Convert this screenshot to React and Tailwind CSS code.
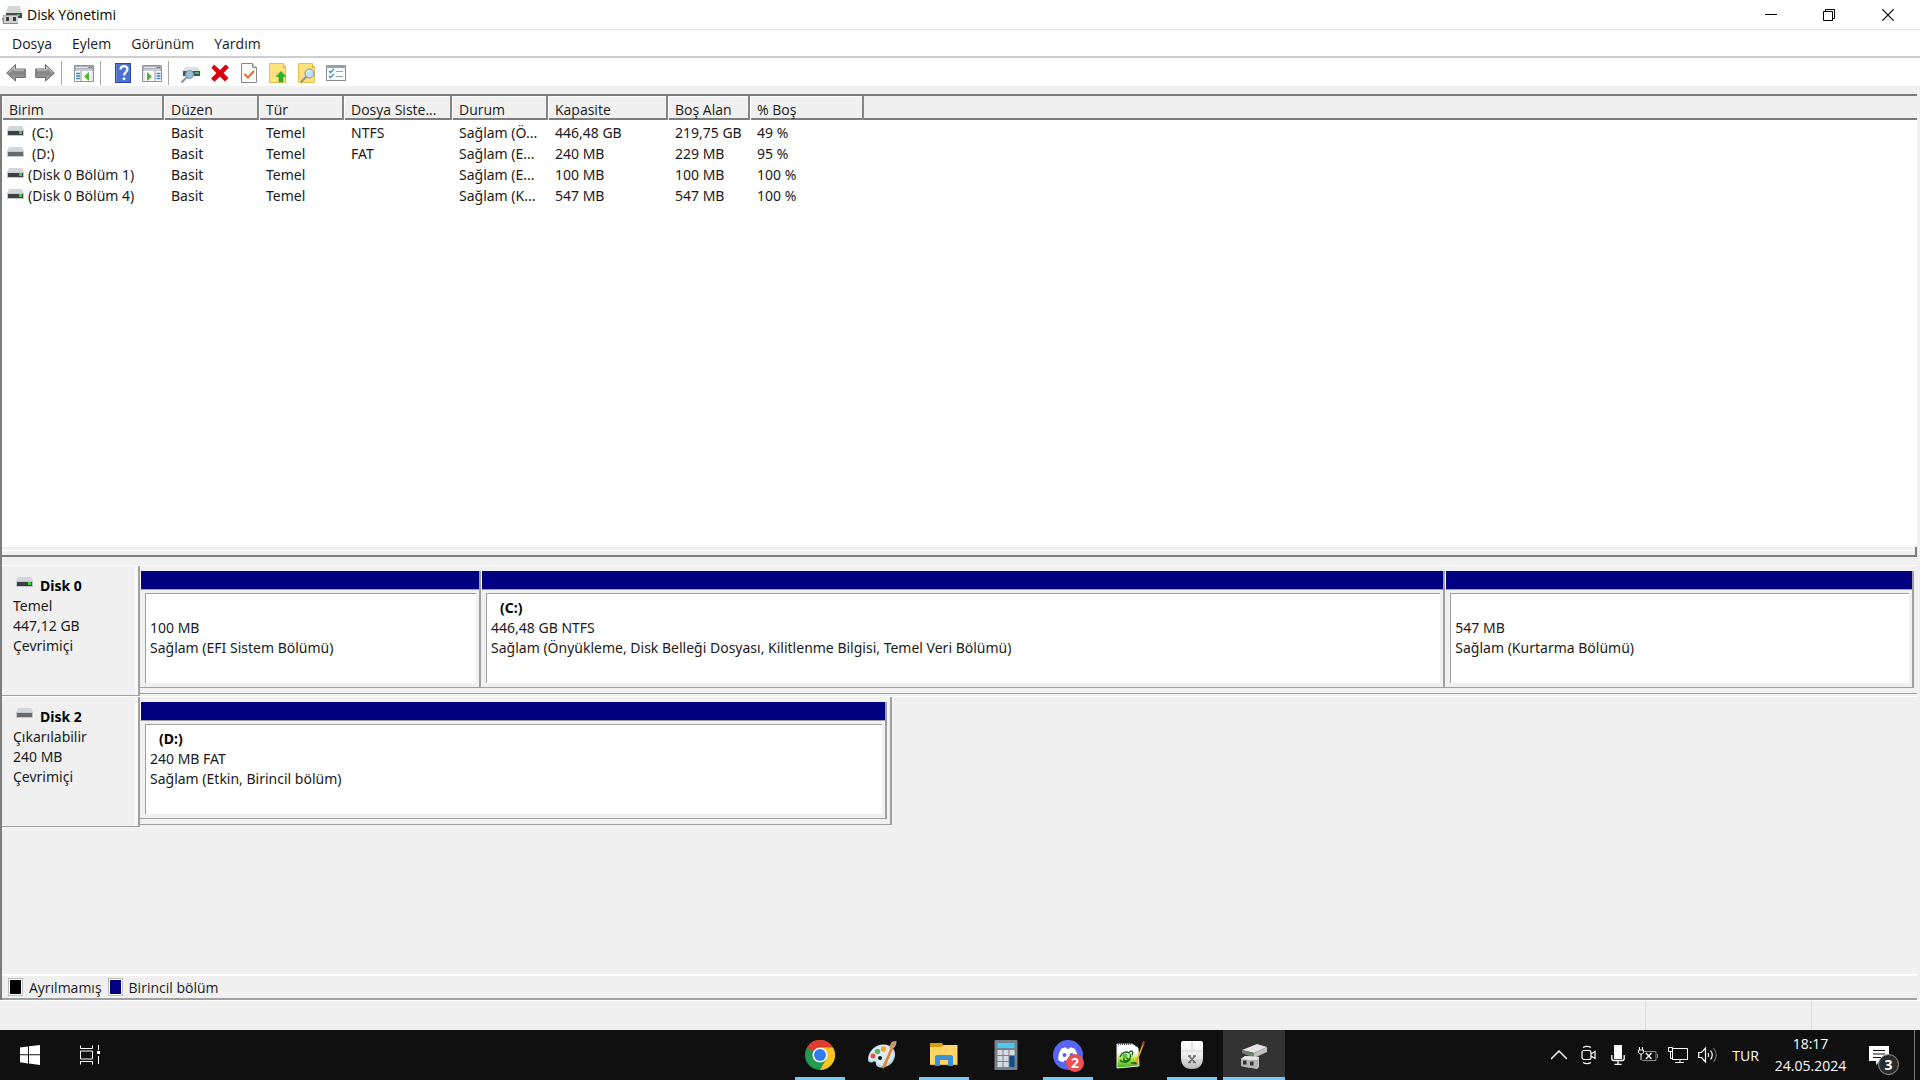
import clsx from "clsx";

const MENU = ["Dosya", "Eylem", "Görünüm", "Yardım"];

const COLUMNS = ["Birim", "Düzen", "Tür", "Dosya Siste...", "Durum", "Kapasite", "Boş Alan", "% Boş"];

const VOLUMES = [
  { name: "(C:)", lettered: true, led: true, cells: ["Basit", "Temel", "NTFS", "Sağlam (Ö...", "446,48 GB", "219,75 GB", "49 %"] },
  { name: "(D:)", lettered: true, led: false, cells: ["Basit", "Temel", "FAT", "Sağlam (E...", "240 MB", "229 MB", "95 %"] },
  { name: "(Disk 0 Bölüm 1)", led: true, cells: ["Basit", "Temel", "", "Sağlam (E...", "100 MB", "100 MB", "100 %"] },
  { name: "(Disk 0 Bölüm 4)", led: true, cells: ["Basit", "Temel", "", "Sağlam (K...", "547 MB", "547 MB", "100 %"] },
];

const DISKS = [
  {
    name: "Disk 0",
    led: true,
    info: ["Temel", "447,12 GB", "Çevrimiçi"],
    width: "w-full",
    parts: [
      { grow: "flex-[340]", letter: "", size: "100 MB", status: "Sağlam (EFI Sistem Bölümü)" },
      { grow: "flex-[965]", letter: "(C:)", size: "446,48 GB NTFS", status: "Sağlam (Önyükleme, Disk Belleği Dosyası, Kilitlenme Bilgisi, Temel Veri Bölümü)" },
      { grow: "flex-[468]", letter: "", size: "547 MB", status: "Sağlam (Kurtarma Bölümü)" },
    ],
  },
  {
    name: "Disk 2",
    led: false,
    info: ["Çıkarılabilir", "240 MB", "Çevrimiçi"],
    width: "w-[42.3%] border-r-2",
    parts: [
      { grow: "flex-1", letter: "(D:)", size: "240 MB FAT", status: "Sağlam (Etkin, Birincil bölüm)" },
    ],
  },
];

function DriveIcon({ led }) {
  return (
    <svg width="17" height="10" viewBox="0 0 17 10" className="shrink-0">
      <path d="M2 0h13l2 4v1H0V4z" fill="#d3d6d9" />
      <path d="M0 4h17v6H0z" fill="#c4c8cc" />
      <path d="M1 5h15v4H1z" fill={led ? "#3c4043" : "#66696c"} />
      {led && <path d="M12 5h3v3h-3z" fill="#35d63a" />}
    </svg>
  );
}

function AppIcon() {
  return (
    <svg width="20" height="20" viewBox="0 0 20 20">
      <path d="M6 1h12l2 7H4z" fill="#d4d6d8" />
      <path d="M4 8h16v5H4z" fill="#43474a" />
      <path d="M15 9h3v2h-3z" fill="#2fc738" />
      <path d="M1 10h15v9H1z" fill="#a7a9ab" />
      <path d="M0 13h16v6H1z" fill="#898b8d" />
      <path d="M2 11h14v7H2z" fill="#cfd0d1" />
      <path d="M4 12h3v4H4zM11 12h3v4h-3z" fill="#3b3d3f" />
    </svg>
  );
}

function ArrowIcon({ flip }) {
  return (
    <svg width="20" height="20" viewBox="0 0 20 20" className={clsx(flip && "-scale-x-100")}>
      <defs>
        <linearGradient id="arrow" x1="0" y1="0" x2="0" y2="1">
          <stop offset="0" stopColor="#b5b5b5" />
          <stop offset="0.5" stopColor="#858585" />
          <stop offset="1" stopColor="#a6a6a6" />
        </linearGradient>
      </defs>
      <path d="M.7 10 9.5 1.5V6h9.8v8.5H9.5V18z" fill="url(#arrow)" stroke="#6c6c6c" strokeLinejoin="round" />
      <path d="M2.5 9.8 8.5 4v3h9.5" fill="none" stroke="#cfcfcf" />
    </svg>
  );
}

function PanelIcon({ right }) {
  return (
    <svg width="20" height="20" viewBox="0 0 20 20">
      <path d="M.5 2.5h19v16H.5z" fill="#fff" stroke="#8d949e" />
      <path d="M1 3h18v5H1z" fill="#aab0ba" />
      <path d="M2 4.5h12M2 7h16" stroke="#e6e9ed" />
      <path d="M15 4.5h1M17 4.5h1" stroke="#5c6470" />
      <path d={right ? "M13 8v10" : "M7 8v10"} stroke="#8d949e" />
      <path d={right ? "M14.5 10.5h4M14.5 13h4M14.5 15.5h4" : "M2 10.5h4M2 13h4M2 15.5h4"} stroke="#3d7fc4" strokeWidth="1.3" />
      <path d={right ? "m5 9 5 4.5L5 18z" : "m15 9-5 4.5 5 4.5z"} fill="#49b726" />
      <path d={right ? "M1 9h2v9H1z" : "M17 9h2v9h-2z"} fill="#e3e6ea" />
    </svg>
  );
}

function HelpIcon() {
  return (
    <svg width="20" height="20" viewBox="0 0 20 20">
      <path d="M2 0h16v20H2z" fill="#2746a8" />
      <path d="M5 1h12v18H5z" fill="#4c70d6" />
      <path d="M3 1h1.5v18H3z" fill="#7590dc" />
      <path d="M7.5 6.5c0-4.5 7-4.5 7-.5 0 3-3.5 3-3.5 6.5" fill="none" stroke="#fff" strokeWidth="2.2" />
      <circle cx="11" cy="15.8" r="1.4" fill="#fff" />
    </svg>
  );
}

function Lens() {
  return (
    <g>
      <path d="m9.5 13.5-5 5" stroke="#8294a6" strokeWidth="2.2" strokeLinecap="round" />
      <circle cx="12.5" cy="10.5" r="4.5" fill="#bfe0f3" stroke="#7593ab" />
      <path d="M10 9.5a3 3 0 0 1 3-2" stroke="#fff" fill="none" />
    </g>
  );
}

function SearchDiskIcon() {
  return (
    <svg width="20" height="20" viewBox="0 0 20 20">
      <path d="M4 4h13l2 4H2z" fill="#dcdee0" />
      <path d="M2 8h17v5H2z" fill="#4a4e51" />
      <path d="M14 9h4v2h-4z" fill="#34d23a" />
      <path d="m6 14-5 5" stroke="#8294a6" strokeWidth="2" strokeLinecap="round" />
      <circle cx="8.5" cy="11.5" r="4" fill="#94bfdd" stroke="#7794a9" />
    </svg>
  );
}

function DeleteIcon() {
  return (
    <svg width="20" height="20" viewBox="0 0 20 20">
      <path d="M4 1.5 10 7l5.5-5.5L19 4.5 13.5 10l5 5-3.5 3.5-5-5-5.5 5.2L1 15.5 6.5 10l-5-5z" fill="#d8000f" />
    </svg>
  );
}

function CheckPageIcon() {
  return (
    <svg width="20" height="20" viewBox="0 0 20 20">
      <path d="M2.5.5h11l4 4v15h-15z" fill="#fbfbfb" stroke="#85898d" />
      <path d="M13.5.5v4h4" fill="#ddd" stroke="#85898d" />
      <path d="m5.5 11 3.5 3.5L15 8" fill="none" stroke="#f26a2e" strokeWidth="2" />
    </svg>
  );
}

function FolderIcon({ search }) {
  return (
    <svg width="20" height="20" viewBox="0 0 20 20">
      <path d="M1.5.5h14v3h2v16h-16z" fill="#ffe17d" stroke="#e6bd4f" />
      <path d="M15.5.5v4h2" fill="#f8d263" stroke="#dbb048" />
      {search ? <Lens /> : <path d="m13 8.5 5 5h-3V19h-4v-5.5H8z" fill="#27b52b" stroke="#169a20" strokeWidth=".5" />}
    </svg>
  );
}

function ChecklistIcon() {
  return (
    <svg width="20" height="20" viewBox="0 0 20 20">
      <path d="M.5 2.5h19v15H.5z" fill="#fff" stroke="#858b92" />
      <path d="M0 2h20v3H0z" fill="#98a0aa" />
      <path d="m3 8 1.5 1.5L8 6M3 13l1.5 1.5L8 11" fill="none" stroke="#2789d8" strokeWidth="1.3" />
      <path d="M10 8.5h7M10 13.5h7" stroke="#9aa1a8" />
    </svg>
  );
}

function ChromeIcon() {
  return (
    <svg width="30" height="30" viewBox="0 0 30 30">
      <circle cx="15" cy="15" r="15" fill="#229a50" />
      <path d="M15 15 2 7.5A15 15 0 0 1 28 7.5z" fill="#e33b2e" />
      <path d="M15 7.5h13A15 15 0 0 1 15 30l6.5-11.2z" fill="#fcc31e" />
      <path d="M2 7.5 8.5 18.8 15 7.5z" fill="#e33b2e" />
      <path d="M2 7.5 8.6 18.7 15 15z" fill="#229a50" />
      <circle cx="15" cy="15" r="7.5" fill="#fff" />
      <circle cx="15" cy="15" r="6" fill="#2d7cf0" />
    </svg>
  );
}

function PaintIcon() {
  return (
    <svg width="30" height="30" viewBox="0 0 30 30">
      <path d="M17 4.5C8 4 1 12 1 19c0 4 3 4 5 3s3 0 3 2c0 6 17 5 19-8C29 9 24 5 17 4.5z" fill="#b9d8ea" />
      <path d="M17 5C9 5 2 12 2 18c0 3 2 3 4 2 4-1 4 2 5 4 5 3 13-1 15-8 1-6-3-11-9-11z" fill="#daedf6" />
      <circle cx="13" cy="18" r="2" fill="#111" />
      <circle cx="6" cy="16" r="2.5" fill="#e44f43" />
      <circle cx="10.5" cy="11.5" r="2.7" fill="#5fb54a" />
      <circle cx="16.5" cy="9" r="2.7" fill="#f5a71e" />
      <path d="M16 29c-1-3 0-4 2-8l5.5-13 2.5 1-5.5 13c-1 3-2 5-4.5 7z" fill="#e6812c" />
      <path d="m22.5 8 1-4c1-3 4-3 6-3 0 4-1 6-4 8z" fill="#c79a6b" />
    </svg>
  );
}

function ExplorerIcon() {
  return (
    <svg width="30" height="30" viewBox="0 0 30 30">
      <path d="M1 3h12l2 3h13v7H1z" fill="#e09b0b" />
      <path d="M1 7h11l3-2h13.5v20H1z" fill="#ffd667" />
      <path d="M1 24h27v1H1z" fill="#e8b63a" />
      <path d="M6 26V16l2-1h14l2 1v10h-5v-6h-8v6z" fill="#3c92d8" />
    </svg>
  );
}

function CalcIcon() {
  return (
    <svg width="30" height="30" viewBox="0 0 30 30">
      <rect x="3.5" width="23" height="30" rx="1" fill="#77818b" />
      <path d="M6.5 3h17v5h-17z" fill="#45cdf2" />
      <path d="M6.5 10h5v5h-5zM12.5 10h5v5h-5zM18.5 10h5v5h-5zM6.5 16h5v5h-5zM12.5 16h5v5h-5zM6.5 22h5v5h-5zM12.5 22h5v5h-5z" fill="#d5dade" />
      <path d="M18.5 16h5v11h-5z" fill="#104a8f" />
    </svg>
  );
}

function DiscordIcon() {
  return (
    <svg width="30" height="30" viewBox="0 0 30 30">
      <circle cx="15" cy="15" r="15" fill="#5865f2" />
      <path d="M8 9c2-1.2 3.5-1.6 5-1.8l.8 1.5h2.4l.8-1.5c1.5.2 3 .6 5 1.8 2 3.5 3 7 2.7 11-2 1.5-3.5 2-5 2.3l-1-2c-2 .7-5.3.7-7.3 0l-1 2c-1.5-.3-3.2-.8-5-2.3C5 16 6 12.5 8 9z" fill="#fff" />
      <circle cx="11.5" cy="15" r="2" fill="#5865f2" />
      <circle cx="18.5" cy="15" r="2" fill="#5865f2" />
    </svg>
  );
}

function NotepadIcon() {
  return (
    <svg width="30" height="30" viewBox="0 0 30 30">
      <defs>
        <linearGradient id="page" x1="0" y1="0" x2="0" y2="1">
          <stop offset="0.35" stopColor="#fff" />
          <stop offset="0.6" stopColor="#b9e94a" />
          <stop offset="1" stopColor="#31b51c" />
        </linearGradient>
      </defs>
      <path d="M2 4h15l6 4 1 18-22 2z" fill="url(#page)" stroke="#e4e8df" />
      <path d="M3 4h13" stroke="#555" strokeWidth="2" strokeDasharray="1 1" />
      <path d="M5 17c2-5 6-6 9-4 2-4 5-1 3 2M5 20c2 3 8 3 10-1M8 15l6 5M11 14c-3 3-3 7 0 7s6-4 4-7M16 23h6" fill="none" stroke="#1e6422" strokeWidth="1.4" />
      <circle cx="10" cy="16" r="2.5" fill="#55c63a" />
      <path d="m28 3-8 19-1 3 3-2 7-19z" fill="#e8a519" />
      <path d="m27 4 1-3 2 1-1 3z" fill="#b83a2a" />
      <path d="m20 22-1 3 3-2z" fill="#4c3218" />
    </svg>
  );
}

function MouseIcon() {
  return (
    <svg width="30" height="30" viewBox="0 0 30 30">
      <defs>
        <linearGradient id="mouse" x1="0" y1="0" x2="0" y2="1">
          <stop offset="0" stopColor="#fff" />
          <stop offset="0.5" stopColor="#ececec" />
          <stop offset="1" stopColor="#b5b5b5" />
        </linearGradient>
      </defs>
      <path d="M4 3q0-2 2-2h18q2 0 2 2v15c0 8-5 11-11 11S4 26 4 18z" fill="url(#mouse)" />
      <path d="M4 11h22M15 1v10" stroke="#d2d2d2" fill="none" />
      <path d="m12 16 6 6.5M18 16l-6 6.5M11 16h3M16 16h3M11 22.5h3M16 22.5h3" stroke="#6d6d6d" strokeWidth="1.6" />
    </svg>
  );
}

function DiskTaskIcon() {
  return (
    <svg width="30" height="30" viewBox="0 0 30 30">
      <path d="m3 10 15-6 10 3-13 6z" fill="#e4e4e4" />
      <path d="m3 10 12 3v5L3 13z" fill="#777" />
      <path d="m15 13 13-6v5l-13 6z" fill="#c1c1c1" />
      <path d="m10 13 3 1v2l-3-1z" fill="#28b632" />
      <path d="m2 19 4-3 14 1v10l-2 2-16-3z" fill="#d1d1d1" />
      <path d="m2 19 9 1v8l-9-2zM12 20h8l-1 8h-7z" fill="#b4b4b4" />
      <path d="M4 20.5h3.5v4H4zM11 21.5h3.5v4H11z" fill="#343434" />
      <path d="m2 19 4-3 14 1-3 3z" fill="#e6e6e6" />
    </svg>
  );
}

const TOOLBAR = [
  { label: "Geri", icon: <ArrowIcon /> },
  { label: "İleri", icon: <ArrowIcon flip /> },
  null,
  { label: "Konsol ağacı", icon: <PanelIcon /> },
  null,
  { label: "Yardım", icon: <HelpIcon /> },
  { label: "Eylem bölmesi", icon: <PanelIcon right /> },
  null,
  { label: "Yeniden tara", icon: <SearchDiskIcon /> },
  { label: "Sil", icon: <DeleteIcon /> },
  { label: "Özellikler", icon: <CheckPageIcon /> },
  { label: "Aç", icon: <FolderIcon /> },
  { label: "Araştır", icon: <FolderIcon search /> },
  { label: "Ayarlar", icon: <ChecklistIcon /> },
];

const APPS = [
  { label: "Chrome", icon: <ChromeIcon />, running: true },
  { label: "Paint", icon: <PaintIcon /> },
  { label: "Dosya Gezgini", icon: <ExplorerIcon />, running: true },
  { label: "Hesap Makinesi", icon: <CalcIcon /> },
  { label: "Discord", icon: <DiscordIcon />, running: true, badge: "2" },
  { label: "Notepad++", icon: <NotepadIcon /> },
  { label: "Mouse", icon: <MouseIcon />, running: true },
  { label: "Disk Yönetimi", icon: <DiskTaskIcon />, active: true },
];

function TitleBar() {
  return (
    <header className="flex h-[30px] items-center border-b border-[#e5e5e5] bg-white pl-0.5">
      <AppIcon />
      <h1 className="ml-[5px] flex-1 text-[14px] leading-5 text-black">Disk Yönetimi</h1>
      <button type="button" aria-label="Simge durumuna küçült" className="flex h-full w-[58px] items-center justify-center">
        <svg width="12" height="12" viewBox="0 0 12 12"><path d="M0 5.5h12" stroke="#000" /></svg>
      </button>
      <button type="button" aria-label="Önceki boyut" className="flex h-full w-[58px] items-center justify-center">
        <svg width="12" height="12" viewBox="0 0 12 12" fill="none" stroke="#000"><path d="M.5 2.5h9v9h-9zM2.5 2.5v-2h9v9h-2" /></svg>
      </button>
      <button type="button" aria-label="Kapat" className="mr-0.5 flex h-full w-[60px] items-center justify-center">
        <svg width="12" height="12" viewBox="0 0 12 12"><path d="m.3.3 11.4 11.4M11.7.3.3 11.7" stroke="#000" strokeWidth="1.2" /></svg>
      </button>
    </header>
  );
}

function VolumeTable() {
  return (
    <section className="flex min-h-60 flex-[466_1_0px] flex-col border-l-2 border-t-2 border-[#7d7d7d] bg-white">
      <table className="w-full table-fixed border-collapse text-left">
        <colgroup>
          <col className="w-[161px]" />
          <col className="w-[95px]" />
          <col className="w-[85px]" />
          <col className="w-[108px]" />
          <col className="w-[96px]" />
          <col className="w-[120px]" />
          <col className="w-[82px]" />
          <col className="w-[114px]" />
          <col />
        </colgroup>
        <thead>
          <tr className="h-6 bg-[#f0f0f0] shadow-[inset_0_-2px_#7d7d7d]">
            {COLUMNS.map(c => (
              <th key={c} className="overflow-hidden border-r-2 border-[#858585] pt-1 pl-[7px] font-normal leading-5 whitespace-nowrap shadow-[inset_1px_1px_#fff]">{c}</th>
            ))}
            <th className="p-0" />
          </tr>
        </thead>
        <tbody className="font-['Noto_Sans','Open_Sans',sans-serif] before:block before:h-0.5">
          {VOLUMES.map(v => (
            <tr key={v.name} className="h-[21px]">
              <td className="p-0">
                <div className="flex items-center pl-[5px] leading-[21px] whitespace-nowrap">
                  <span className="-mt-1"><DriveIcon led={v.led} /></span>
                  <span className={v.lettered ? "ml-2" : "ml-1"}>{v.name}</span>
                </div>
              </td>
              {v.cells.map((cell, i) => (
                <td key={i} className="p-0 pl-2 leading-[21px] whitespace-nowrap">{cell}</td>
              ))}
              <td />
            </tr>
          ))}
        </tbody>
      </table>
      <div className="mt-auto h-2.5 border-b-2 border-r-2 border-[#7d7d7d] bg-[#f0f0f0] shadow-[inset_0_3px_#f0f0f0,inset_0_4px_#fff]" />
    </section>
  );
}

function Partition({ part }) {
  return (
    <div className={clsx("flex min-w-0 flex-col border-b border-r-2 border-[#a0a0a0]", part.grow)}>
      <div className="h-[19px] border-b border-l border-l-white border-b-[#a0a0a0] bg-[#000080]" />
      <div className="mt-[3px] mr-[3px] mb-1 ml-[5px] h-[91px] border-l border-t border-[#a0a0a0] bg-white pt-1 pl-1 leading-5 whitespace-nowrap">
        <div className="h-5 pl-[9px] font-bold text-black">{part.letter}</div>
        <div>{part.size}</div>
        <div>{part.status}</div>
      </div>
    </div>
  );
}

function DiskRow({ disk }) {
  return (
    <div className="flex h-[131px] border-t border-white font-['Noto_Sans','Open_Sans',sans-serif]">
      <div className="w-[138px] shrink-0 border-r-2 border-b border-[#a0a0a0] pt-2.5 pl-[11px] leading-5 shadow-[inset_-3px_0_#fafafa]">
        <div className="flex items-center pl-[3px]">
          <span className="-mt-2"><DriveIcon led={disk.led} /></span>
          <strong className="ml-[7px] text-black">{disk.name}</strong>
        </div>
        {disk.info.map(line => <div key={line}>{line}</div>)}
      </div>
      <div className="flex min-w-0 flex-1">
        <div className={clsx("mb-0.5 flex border-b border-[#a0a0a0] pt-[5px] pr-[3px] pb-[5px]", disk.width)}>
          {disk.parts.map(p => <Partition key={p.status} part={p} />)}
        </div>
      </div>
    </div>
  );
}

function Legend() {
  return (
    <div className="mt-auto flex h-[26px] items-center border-t-2 border-b-2 border-t-white border-b-[#a0a0a0] pl-[7px]">
      <span className="h-4 w-[13px] border border-white bg-black outline outline-[#bcbcbc]" />
      <span className="mr-[7px] ml-[7px]">Ayrılmamış</span>
      <span className="h-4 w-[13px] border border-white bg-[#000080] outline outline-[#bcbcbc]" />
      <span className="ml-[7px]">Birincil bölüm</span>
    </div>
  );
}

function Tray() {
  return (
    <div className="flex items-center text-white">
      <button type="button" aria-label="Gizli simgeler" className="w-[30px] pl-[7px]">
        <svg width="16" height="20" viewBox="0 0 16 20" fill="none" stroke="#fff" strokeWidth="1.5"><path d="m0 14 8-8 8 8" /></svg>
      </button>
      <button type="button" aria-label="Toplantı" className="flex w-[30px] justify-center">
        <svg width="16" height="20" viewBox="0 0 16 20" fill="none" stroke="#fff" strokeWidth="1.2">
          <rect x="1" y="5.5" width="9" height="9" rx="2" />
          <path d="m10 9 4-2.5v7L10 11M2 2.5Q6 .3 10 2.5M2 17.5q4 2.2 8 0" />
        </svg>
      </button>
      <button type="button" aria-label="Mikrofon" className="flex w-[28px] justify-center">
        <svg width="14" height="20" viewBox="0 0 14 20"><path d="M3 0h8v14H3z" fill="#fff" /><path d="M.8 10v3.5q0 2 2 2h8.4q2 0 2-2V10M7 16v3M3.5 19.3h7" fill="none" stroke="#fff" strokeWidth="1.3" /></svg>
      </button>
      <button type="button" aria-label="Pil" className="flex w-[31px] justify-center">
        <svg width="20" height="18" viewBox="0 0 20 18" fill="none">
          <path d="M5 5.5h13v9H4" stroke="#8b8b8b" /><path d="M19.5 8v4" stroke="#8b8b8b" />
          <path d="M1.5 1v3M4.5 1v3M.5 4h5v2.5l-2.5 2-2.5-2zM3 8v6" stroke="#fff" />
          <path d="m8 7 5.5 6M13.5 7 8 13" stroke="#fff" strokeWidth="1.3" />
        </svg>
      </button>
      <button type="button" aria-label="Ağ" className="flex w-[30px] justify-center">
        <svg width="20" height="18" viewBox="0 0 20 18" fill="none" stroke="#fff"><path d="M4.5 2.5h15v11h-15zM12 14v3M7 16.5h9M.5 1.5h4v4h-4zM2.5 5.5v7h2" /></svg>
      </button>
      <button type="button" aria-label="Ses" className="flex w-[30px] justify-center">
        <svg width="20" height="20" viewBox="0 0 20 20" fill="none" stroke="#fff" strokeWidth="1.2">
          <path d="M.7 7.5h2.8l4-4.5v14l-4-4.5H.7zM10 8q1.5 2 0 4M12.5 5.5q3.5 4.5 0 9" />
          <path d="M15.5 3q5.5 7 0 14" stroke="#6f6f6f" />
        </svg>
      </button>
      <button type="button" className="w-[45px] text-center">TUR</button>
      <button type="button" className="w-[85px] text-center leading-[22px]">
        <div>18:17</div>
        <div>24.05.2024</div>
      </button>
      <button type="button" aria-label="Bildirimler" className="relative ml-4 h-full w-[45px]">
        <svg width="20" height="20" viewBox="0 0 20 20"><path d="M0 1h20v15h-9l-4 4v-4H0z" fill="#fff" /><path d="M4 5.5h12M4 9h12M4 12.5h8" stroke="#101010" /></svg>
        <span className="absolute top-6 left-[9px] flex size-[21px] items-center justify-center rounded-full border border-[#999] bg-[#2b2b2b] font-bold leading-none">3</span>
      </button>
      <div className="h-full w-1.5 border-l border-[#777]" />
    </div>
  );
}

function Taskbar() {
  return (
    <footer className="grid h-[50px] shrink-0 grid-cols-[1fr_auto_1fr] bg-[#101010]">
      <div className="flex items-center">
        <button type="button" aria-label="Başlat" className="flex w-[60px] justify-center">
          <svg width="20" height="20" viewBox="0 0 20 20" fill="#fff"><path d="M0 2.5 8 1.4v7.8H0zM9 1.2 20 0v9.2H9zM0 10.2h8v8.2l-8-1.1zM9 10.2h11V20L9 18.5z" /></svg>
        </button>
        <button type="button" aria-label="Görev görünümü" className="flex w-[60px] justify-center">
          <svg width="20" height="20" viewBox="0 0 20 20" fill="none" stroke="#fff"><path d="M.5.5v3h12v-3M.5 6h12v8H.5zM.5 19.5v-3h12v3M18.5 0v5M18.5 11v8" /><path d="M17 6h3v3h-3z" fill="#fff" stroke="none" /></svg>
        </button>
      </div>
      <nav className="ml-[154px] flex">
        {APPS.map(app => (
          <button key={app.label} type="button" aria-label={app.label}
            className={clsx("relative flex w-[62px] items-center justify-center", app.active && "bg-[#333]")}>
            {app.icon}
            {app.badge && <span className="absolute top-6 left-[29px] flex size-[18px] items-center justify-center rounded-full bg-[#ee4f52] leading-none font-bold text-white">{app.badge}</span>}
            {app.running && <span className="absolute inset-x-1.5 bottom-0 h-[3px] bg-[#76c8f7]" />}
            {app.active && <span className="absolute inset-x-0 bottom-0 h-[3px] bg-[#76c8f7]" />}
          </button>
        ))}
      </nav>
      <div className="flex justify-end"><Tray /></div>
    </footer>
  );
}

export default function App() {
  return (
    <div className="flex min-h-screen flex-col bg-[#f0f0f0] font-['Open_Sans','Noto_Sans',sans-serif] text-[14px] text-[#1a1a1a]">
      <TitleBar />

      {/* Menu */}
      <nav className="flex h-7 items-center border-b-2 border-[#cdcdd2] bg-white pt-0.5 pl-0.5">
        {MENU.map(m => <button key={m} type="button" className="px-2.5 leading-5">{m}</button>)}
      </nav>

      {/* Toolbar */}
      <div className="flex h-7 items-center bg-white pt-0.5 pl-px">
        {TOOLBAR.map((tool, i) => tool ? (
          <button key={tool.label} type="button" aria-label={tool.label} className="flex w-[29px] justify-center">{tool.icon}</button>
        ) : (
          <span key={i} className="mr-[7px] ml-0.5 h-6 w-px bg-[#a8a8a8]" />
        ))}
      </div>

      <main className="mr-[3px] flex flex-1 flex-col pt-2">
        <VolumeTable />
        <section className="flex min-h-80 flex-[440_1_0px] flex-col border-l-2 border-[#7d7d7d] pt-2">
          {DISKS.map(d => <DiskRow key={d.name} disk={d} />)}
          <Legend />
        </section>
      </main>

      {/* Status bar */}
      <div className="flex h-[30px] shrink-0 justify-end border-t border-white">
        <span className="w-[166px] border-l border-[#dcdcdc]" />
        <span className="w-[109px] border-l border-[#dcdcdc]" />
      </div>

      <Taskbar />
    </div>
  );
}
